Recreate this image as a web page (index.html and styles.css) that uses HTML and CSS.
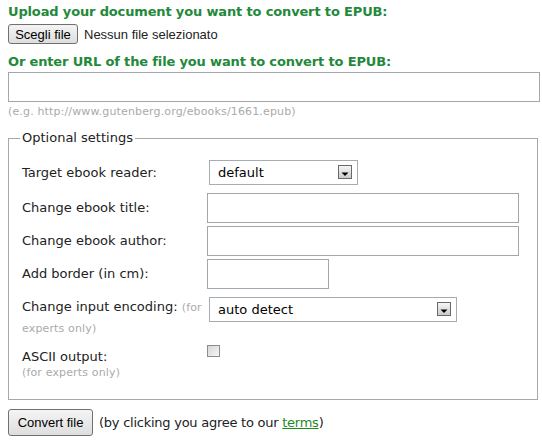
FILE: index.html
```html
<!DOCTYPE html>
<html lang="en">
<head>
  <meta charset="UTF-8" />
  <meta name="viewport" content="width=device-width, initial-scale=1.0"/>
  <title>Convert to EPUB</title>
  <link rel="stylesheet" href="styles.css">
</head>
<body>
  <form class="convert-form">
    <!-- Upload -->
    <h2 class="step-title">Upload your document you want to convert to EPUB:</h2>
    <div class="file-row">
      <button type="button" class="btn btn-file">Scegli file</button>
      <span class="file-name">Nessun file selezionato</span>
    </div>

    <!-- URL -->
    <h2 class="step-title step-url">Or enter URL of the file you want to convert to EPUB:</h2>
    <input type="text" class="url-input" name="url">
    <div class="hint">(e.g. http://www.gutenberg.org/ebooks/1661.epub)</div>

    <!-- Options -->
    <fieldset class="options">
      <legend>Optional settings</legend>

      <div class="opt-row row-reader">
        <label class="opt-label">Target ebook reader:</label>
        <span class="select-wrap">
          <select class="select select-short">
            <option>default</option>
          </select>
          <span class="select-arrow">
            <svg width="14" height="14" viewBox="0 0 14 14">
              <defs>
                <linearGradient id="ag1" x1="0" y1="0" x2="0" y2="1">
                  <stop offset="0" stop-color="#f7f7f7"/>
                  <stop offset="1" stop-color="#c9c9c9"/>
                </linearGradient>
              </defs>
              <rect x="0.5" y="0.5" width="13" height="13" fill="url(#ag1)" stroke="#6a6a6a"/>
              <path d="M3.5 7.5h7l-3.5 3.5z" fill="#000"/>
            </svg>
          </span>
        </span>
      </div>

      <div class="opt-row row-title">
        <label class="opt-label">Change ebook title:</label>
        <input type="text" class="text-input text-long">
      </div>

      <div class="opt-row row-author">
        <label class="opt-label">Change ebook author:</label>
        <input type="text" class="text-input text-long">
      </div>

      <div class="opt-row row-border">
        <label class="opt-label">Add border (in cm):</label>
        <input type="text" class="text-input text-short">
      </div>

      <div class="opt-row row-encoding">
        <label class="opt-label opt-label-tall">Change input encoding: <small class="note">(for experts only)</small></label>
        <span class="select-wrap">
          <select class="select select-long">
            <option>auto detect</option>
          </select>
          <span class="select-arrow">
            <svg width="14" height="14" viewBox="0 0 14 14">
              <defs>
                <linearGradient id="ag2" x1="0" y1="0" x2="0" y2="1">
                  <stop offset="0" stop-color="#f7f7f7"/>
                  <stop offset="1" stop-color="#c9c9c9"/>
                </linearGradient>
              </defs>
              <rect x="0.5" y="0.5" width="13" height="13" fill="url(#ag2)" stroke="#6a6a6a"/>
              <path d="M3.5 7.5h7l-3.5 3.5z" fill="#000"/>
            </svg>
          </span>
        </span>
      </div>

      <div class="opt-row row-ascii">
        <div class="opt-label opt-label-ascii">
          ASCII output:
          <div class="note">(for experts only)</div>
        </div>
        <span class="checkbox"></span>
      </div>
    </fieldset>

    <!-- Submit -->
    <div class="submit-row">
      <button type="submit" class="btn btn-convert">Convert file</button>
      <span class="agree">(by clicking you agree to our <a href="#">terms</a>)</span>
    </div>
  </form>
</body>
</html>
```

FILE: styles.css
```css
body {
  margin: 4px 0 0 8px;
  padding: 0;
  background-color: white;
  font-family: "DejaVu Sans", Verdana, sans-serif;
  font-size: 13px;
  color: #222;
}

.step-title {
  margin: 0;
  font-size: 13px;
  line-height: 16px;
  font-weight: bold;
  letter-spacing: -0.15px;
  color: #23893a;
}

.step-url {
  margin-top: 10px;
}

.file-row {
  display: flex;
  align-items: center;
  margin-top: 4px;
  height: 20px;
}

.btn {
  font-family: "Liberation Sans", Arial, sans-serif;
  font-size: 13px;
  color: #000;
  border: 1px solid #707070;
  border-radius: 3px;
  background: linear-gradient(#f4f4f4, #dedede);
  margin: 0;
  padding: 0 8px;
}

.btn-file {
  height: 20px;
  width: 70px;
  padding: 0;
}

.file-name {
  font-family: "Liberation Sans", Arial, sans-serif;
  font-size: 13px;
  margin-left: 6px;
}

.url-input {
  display: block;
  box-sizing: border-box;
  width: 532px;
  height: 30px;
  margin: 2px 0 0;
  border: 1px solid #a3a7ab;
}

.hint {
  margin-top: 3px;
  font-size: 11px;
  letter-spacing: 0.15px;
  line-height: 14px;
  color: #aaa;
}

.options {
  box-sizing: border-box;
  width: 530px;
  margin: 10px 0 0;
  padding: 13px 13px 19px;
  border: 1px solid #a2aca2;
}

.options legend {
  padding: 0 2px;
  margin-left: -2px;
  font-size: 13px;
  line-height: 18px;
  color: #222;
}

.opt-row {
  display: flex;
  align-items: center;
}

.opt-label {
  flex: 0 0 185px;
  line-height: 18px;
}

.row-title {
  margin-top: 8px;
}

.row-author,
.row-border {
  margin-top: 3px;
}

.row-encoding {
  align-items: flex-start;
  margin-top: 8px;
}

.opt-label-tall {
  line-height: 20px;
}

.row-ascii {
  align-items: flex-start;
  margin-top: 6px;
}

.opt-label-ascii {
  padding-top: 3px;
}

.note {
  font-size: 11px;
  letter-spacing: 0.15px;
  color: #aaa;
}

.opt-label-ascii .note {
  line-height: 14px;
}

.text-input {
  box-sizing: border-box;
  height: 30px;
  margin: 0;
  border: 1px solid #a3a7ab;
}

.text-long {
  width: 312px;
}

.text-short {
  width: 122px;
}

.select-wrap {
  position: relative;
  display: inline-block;
  margin-left: 2px;
}

.select {
  appearance: none;
  box-sizing: border-box;
  height: 25px;
  margin: 0;
  padding: 0 0 0 8px;
  border: 1px solid #a5acb2;
  background: white;
  font-family: "DejaVu Sans", Verdana, sans-serif;
  font-size: 13px;
  color: #000;
}

.select-short {
  width: 149px;
}

.select-long {
  width: 248px;
}

.select-arrow {
  position: absolute;
  right: 6px;
  top: 5px;
  width: 14px;
  height: 14px;
  pointer-events: none;
}

.select-arrow svg {
  display: block;
}

.checkbox {
  display: block;
  box-sizing: border-box;
  width: 13px;
  height: 12px;
  border: 1px solid #8c8c8c;
  background: linear-gradient(135deg, #d6d6d6, #f6f6f6);
}

.submit-row {
  display: flex;
  align-items: center;
  margin-top: 9px;
}

.btn-convert {
  height: 27px;
  width: 85px;
  padding: 0;
}

.agree {
  margin-left: 6px;
  letter-spacing: -0.25px;
}

.agree a {
  color: #1f8a1f;
}
```
